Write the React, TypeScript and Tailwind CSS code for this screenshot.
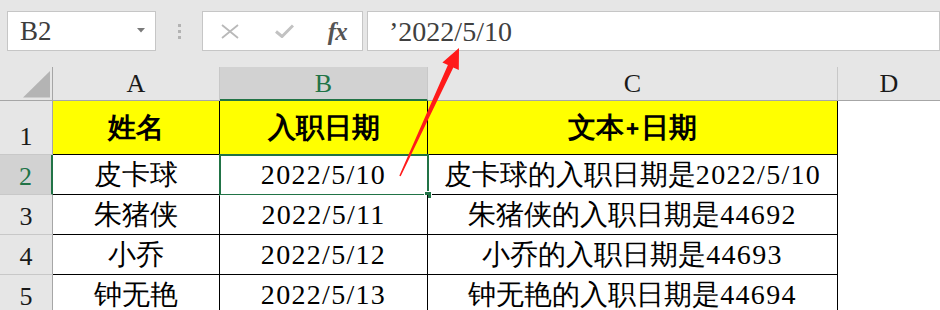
import React from "react";

type Row = { n: number; a: string; b: string; cText: string; cNum: string };

const rows: Row[] = [
  { n: 2, a: "皮卡球", b: "2022/5/10", cText: "皮卡球的入职日期是", cNum: "2022/5/10" },
  { n: 3, a: "朱猪侠", b: "2022/5/11", cText: "朱猪侠的入职日期是", cNum: "44692" },
  { n: 4, a: "小乔", b: "2022/5/12", cText: "小乔的入职日期是", cNum: "44693" },
  { n: 5, a: "钟无艳", b: "2022/5/13", cText: "钟无艳的入职日期是", cNum: "44694" },
];

function Num({ children }: { children: React.ReactNode }) {
  return <span className="tracking-[1.3px] font-['Liberation_Serif']">{children}</span>;
}

function Cjk({ children }: { children: React.ReactNode }) {
  return <span className="font-serif">{children}</span>;
}

export default function App() {
  return (
    <div className="relative w-[940px] h-[310px] overflow-hidden bg-[#e6e6e6] font-['Liberation_Serif']">
      {/* Formula toolbar */}
      <div className="flex items-start h-[67px] pt-[11px] pl-[7px]">
        {/* Name box */}
        <div className="w-[151px] h-[40px] bg-white border border-[#c6c6c6] flex items-center justify-between pl-[12px] pr-[10px]">
          <span className="text-[27px] leading-none text-[#3c3c3c]">B2</span>
          <svg width="8" height="5" viewBox="0 0 8 5" className="mb-[2px]">
            <path d="M0 0 H8 L4 4.5 Z" fill="#7a7a7a" />
          </svg>
        </div>
        {/* Separator dots */}
        <div className="w-[46px] h-[40px] flex flex-col items-center justify-center gap-[3px]">
          <div className="w-[3px] h-[3px] bg-[#b3b3b3]" />
          <div className="w-[3px] h-[3px] bg-[#b3b3b3]" />
          <div className="w-[3px] h-[3px] bg-[#b3b3b3]" />
        </div>
        {/* fx box */}
        <div className="w-[163px] h-[40px] bg-white border border-[#c6c6c6] flex items-center pl-[18px]">
          <svg width="18" height="15" viewBox="0 0 18 15">
            <path d="M1 1 L17 14 M17 1 L1 14" stroke="#b9b9b9" strokeWidth="1.8" fill="none" />
          </svg>
          <svg width="19" height="14" viewBox="0 0 19 14" className="ml-[36px]">
            <path d="M1 7.5 L7 12.5 L18 1.5" stroke="#c2c2c2" strokeWidth="3" fill="none" />
          </svg>
          <span className="ml-[34px] text-[25px] leading-none italic font-bold text-[#555] tracking-[-1px]">
            fx
          </span>
        </div>
        {/* Formula bar */}
        <div className="ml-[4px] w-[580px] h-[40px] bg-white border border-[#c6c6c6] flex items-center pl-[21px]">
          <span className="text-[28px] leading-none text-[#404040] pt-[2px]">’2022/5/10</span>
        </div>
      </div>

      {/* Column headers */}
      <div className="flex h-[34px] text-[26px] leading-none">
        <div className="w-[53px] shrink-0 relative border-r border-b border-[#a6a6a6]">
          <svg width="53" height="34" viewBox="0 0 53 34" className="absolute left-0 top-0">
            <path d="M23 30.5 L50 4 L50 30.5 Z" fill="#b4b4b4" />
          </svg>
        </div>
        <div className="w-[167px] shrink-0 border-r border-b border-r-[#c8c8c8] border-b-[#a6a6a6] flex items-center justify-center text-[#1a1a1a]">
          A
        </div>
        <div className="w-[208px] shrink-0 bg-[#d2d2d2] border-r border-r-[#c8c8c8] border-b-2 border-b-[#217346] flex items-center justify-center text-[#217346] pt-[2px]">
          B
        </div>
        <div className="w-[410px] shrink-0 border-r border-b border-r-[#c8c8c8] border-b-[#a6a6a6] flex items-center justify-center text-[#1a1a1a]">
          C
        </div>
        <div className="flex-1 border-b border-[#a6a6a6] flex items-center justify-center text-[#1a1a1a]">
          D
        </div>
      </div>

      {/* Row 1 */}
      <div className="flex h-[54px] text-[28px] leading-none">
        <div className="w-[53px] shrink-0 bg-[#e6e6e6] border-r border-b border-r-[#a6a6a6] border-b-[#c8c8c8] flex items-end justify-center pb-[4px] text-[#1a1a1a] text-[26px]">
          1
        </div>
        <div className="w-[167px] shrink-0 bg-[#ffff00] border-r border-b border-black flex items-center justify-center font-bold text-black">
          <Cjk>姓名</Cjk>
        </div>
        <div className="w-[208px] shrink-0 bg-[#ffff00] border-r border-b border-black flex items-center justify-center font-bold text-black">
          <Cjk>入职日期</Cjk>
        </div>
        <div className="w-[410px] shrink-0 bg-[#ffff00] border-r border-b border-black flex items-center justify-center font-bold text-black">
          <Cjk>文本+日期</Cjk>
        </div>
        <div className="flex-1 bg-white" />
      </div>

      {/* Data rows */}
      {rows.map((r) => {
        const sel = r.n === 2;
        return (
          <div key={r.n} className="flex h-[40px] text-[28px] leading-none">
            <div
              className={
                sel
                  ? "w-[53px] shrink-0 border-b border-b-[#c8c8c8] flex items-end justify-center pb-[4px] text-[26px] bg-[#d2d2d2] border-r-2 border-r-[#217346] text-[#217346]"
                  : "w-[53px] shrink-0 border-b border-b-[#c8c8c8] flex items-end justify-center pb-[4px] text-[26px] bg-[#e6e6e6] border-r border-r-[#a6a6a6] text-[#1a1a1a]"
              }
            >
              {r.n}
            </div>
            <div className="w-[167px] shrink-0 bg-white border-r border-b border-black flex items-center justify-center text-black">
              <Cjk>{r.a}</Cjk>
            </div>
            <div className="w-[208px] shrink-0 relative bg-white border-r border-b border-black flex items-center justify-center text-black">
              <Num>{r.b}</Num>
              {sel && (
                <>
                  <div className="absolute -left-[1px] -top-[1px] -right-[2px] -bottom-[2px] border-2 border-[#217346]" />
                  <div className="absolute -right-[5px] -bottom-[5px] w-[8px] h-[8px] bg-[#217346] border border-white" />
                </>
              )}
            </div>
            <div className="w-[410px] shrink-0 bg-white border-r border-b border-black flex items-center justify-center text-black">
              <Cjk>{r.cText}</Cjk>
              <Num>{r.cNum}</Num>
            </div>
            <div className="flex-1 bg-white" />
          </div>
        );
      })}

      {/* Red arrow annotation */}
      <svg
        width="940"
        height="310"
        viewBox="0 0 940 310"
        className="absolute left-0 top-0 pointer-events-none"
      >
        <path
          d="M399.3 175.7 L447.9 64.9 L442.4 62.4 L459 48 L458.8 69.9 L453.3 67.5 L400.7 176.3 Z"
          fill="#ff1a1a"
        />
      </svg>
    </div>
  );
}
